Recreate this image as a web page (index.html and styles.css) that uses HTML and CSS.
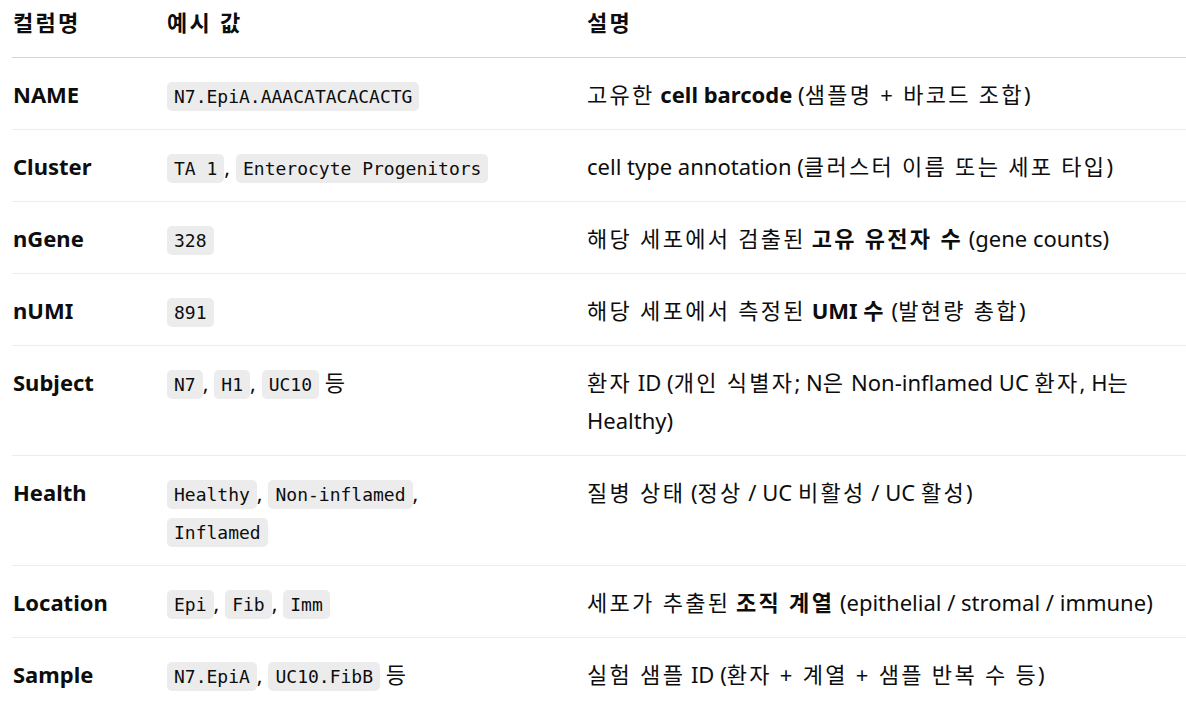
FILE: index.html
```html
<!DOCTYPE html>
<html lang="ko">
<head>
<meta charset="utf-8">
<link rel="stylesheet" href="styles.css">
</head>
<body>
<table class="tbl">
  <colgroup>
    <col class="c1"><col class="c2"><col class="c3">
  </colgroup>
  <thead>
    <tr><th><span class="ko">컬럼명</span></th><th><span class="ko">예시 값</span></th><th><span class="ko">설명</span></th></tr>
  </thead>
  <tbody>
    <tr>
      <td class="key">NAME</td>
      <td class="ex"><code>N7.EpiA.AAACATACACACTG</code></td>
      <td><span class="ko">고유한</span> <strong>cell barcode</strong> (<span class="ko">샘플명 + 바코드 조합</span>)</td>
    </tr>
    <tr>
      <td class="key">Cluster</td>
      <td class="ex"><code>TA 1</code>, <code>Enterocyte Progenitors</code></td>
      <td>cell type annotation (<span class="ko">클러스터 이름 또는 세포 타입</span>)</td>
    </tr>
    <tr>
      <td class="key">nGene</td>
      <td class="ex"><code>328</code></td>
      <td><span class="ko">해당 세포에서 검출된</span> <strong class="ko">고유 유전자 수</strong> (gene counts)</td>
    </tr>
    <tr>
      <td class="key">nUMI</td>
      <td class="ex"><code>891</code></td>
      <td><span class="ko">해당 세포에서 측정된</span> <strong>UMI <span class="ko">수</span></strong> (<span class="ko">발현량 총합</span>)</td>
    </tr>
    <tr>
      <td class="key">Subject</td>
      <td class="ex"><code>N7</code>, <code>H1</code>, <code>UC10</code> <span class="ko">등</span></td>
      <td><span class="ko">환자</span> ID (<span class="ko">개인 식별자</span>; N<span class="ko">은</span> Non-inflamed UC <span class="ko">환자</span>, H<span class="ko">는</span> Healthy)</td>
    </tr>
    <tr>
      <td class="key">Health</td>
      <td class="ex"><code>Healthy</code>, <code>Non-inflamed</code>, <code>Inflamed</code></td>
      <td><span class="ko">질병 상태</span> (<span class="ko">정상</span> / UC <span class="ko">비활성</span> / UC <span class="ko">활성</span>)</td>
    </tr>
    <tr>
      <td class="key">Location</td>
      <td class="ex"><code>Epi</code>, <code>Fib</code>, <code>Imm</code></td>
      <td><span class="ko">세포가 추출된</span> <strong class="ko">조직 계열</strong> (epithelial / stromal / immune)</td>
    </tr>
    <tr>
      <td class="key">Sample</td>
      <td class="ex"><code>N7.EpiA</code>, <code>UC10.FibB</code> <span class="ko">등</span></td>
      <td><span class="ko">실험 샘플</span> ID (<span class="ko">환자 + 계열 + 샘플 반복 수 등</span>)</td>
    </tr>
  </tbody>
</table>
</body>
</html>
```

FILE: styles.css
```css
html, body {
  margin: 0;
  padding: 0;
  background: #ffffff;
}
body {
  font-family: "Noto Sans", "Noto Sans CJK KR", sans-serif;
  font-size: 22px;
  color: #0d0d0d;
}
.tbl {
  border-collapse: collapse;
  table-layout: fixed;
  width: calc(100% - 12px);
  margin-left: 12px;
}
.c1 { width: 154px; }
.c2 { width: 420px; }
.tbl th {
  text-align: left;
  font-weight: 700;
  line-height: 38px;
  padding: 3px 0 16px 1px;
  border-bottom: 1px solid #d4d4d4;
  vertical-align: top;
}
.tbl td {
  line-height: 38px;
  padding: 17px 0 16px 1px;
  border-bottom: 1px solid #ececec;
  vertical-align: top;
}
.tbl tbody tr:last-child td {
  border-bottom: none;
}
.tbl td.ex {
  padding-right: 70px;
}
.key {
  font-weight: 700;
}
strong {
  font-weight: 700;
}
.ko {
  letter-spacing: 2.3px;
}
code {
  font-family: "DejaVu Sans Mono", "Liberation Mono", monospace;
  font-size: 18px;
  line-height: 0;
  background: #ececec;
  border-radius: 5px;
  padding: 4px 7px;
}
```
